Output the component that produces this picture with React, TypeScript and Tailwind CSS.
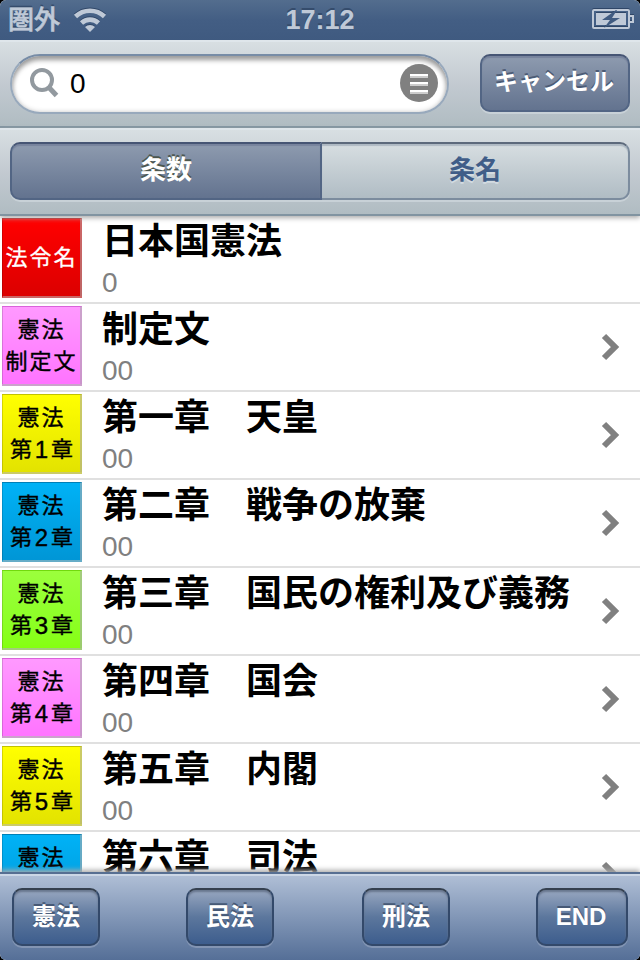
const latin = "font-['Liberation_Sans','Noto_Sans_CJK_JP',sans-serif]";

type Row = { tile: string[]; digit?: string; bg: string; title: string; code: string; light?: boolean };

const magenta = "bg-linear-to-b from-[#ff99ff] to-[#ff73ff]";
const yellow = "bg-linear-to-b from-[#ffff00] to-[#e3e300]";
const blue = "bg-linear-to-b from-[#00b2f6] to-[#0096d6]";
const green = "bg-linear-to-b from-[#9bff3c] to-[#85ff10]";

const rows: Row[] = [
  { tile: ["法令名"], bg: "bg-linear-to-b from-[#ff0000] to-[#dc0000]", title: "日本国憲法", code: "0", light: true },
  { tile: ["憲法", "制定文"], bg: magenta, title: "制定文", code: "00" },
  { tile: ["憲法"], digit: "1", bg: yellow, title: "第一章　天皇", code: "00" },
  { tile: ["憲法"], digit: "2", bg: blue, title: "第二章　戦争の放棄", code: "00" },
  { tile: ["憲法"], digit: "3", bg: green, title: "第三章　国民の権利及び義務", code: "00" },
  { tile: ["憲法"], digit: "4", bg: magenta, title: "第四章　国会", code: "00" },
  { tile: ["憲法"], digit: "5", bg: yellow, title: "第五章　内閣", code: "00" },
  { tile: ["憲法", "\u3000"], bg: blue, title: "第六章　司法", code: "" },
];

function StatusBar() {
  return (
    <header className="flex h-10 shrink-0 items-center justify-between bg-linear-to-b from-[#536d8e] via-[#435e84] to-[#3f5a80] text-[#bfc9d7]">
      <div className="flex w-[200px] items-center pl-[8px]">
        <span className="text-[26px] leading-[40px] font-medium [-webkit-text-stroke:0.6px_#bfc9d7] [text-shadow:0_-2px_0_#354c6c]">圏外</span>
        <svg className="mb-[2px] ml-[13px] drop-shadow-[0_-1px_0_#2f4667]" width="34" height="26" viewBox="0 0 34 26" fill="none" stroke="currentColor" strokeWidth="4.6">
          <path d="M2.5 10.5a21 21 0 0 1 29 0" />
          <path d="M8.5 17a12.5 12.5 0 0 1 17 0" />
          <path d="M17 26l-5-5a7 7 0 0 1 10 0z" fill="currentColor" stroke="none" />
        </svg>
      </div>
      <span className="text-[27px] leading-[40px] font-bold [text-shadow:0_-2px_0_#354c6c]">17:12</span>
      <div className="flex w-[200px] justify-end pr-[6px] pb-[2px]">
        <svg width="42" height="20" viewBox="0 0 42 20" className="drop-shadow-[0_-1px_0_#2f4667]">
          <rect x="1" y="1" width="36" height="18" rx="1" fill="none" stroke="#bfc9d7" strokeWidth="2" />
          <path d="M38 7h3v6h-3" fill="none" stroke="#bfc9d7" strokeWidth="2" />
          <rect x="4" y="4" width="30" height="12" fill="#bfc9d7" />
          <path d="M24 1L10 11h8l-6 8 16-10h-8l5-8z" fill="#405b81" />
        </svg>
      </div>
    </header>
  );
}

function SearchBar() {
  return (
    <div className="flex h-[88px] shrink-0 items-start justify-between border-b-2 border-[#8194a1] bg-linear-to-b from-[#d9e0e3] via-[#c3cad1] to-[#b0bcc2] px-[10px] pt-[14px] shadow-[inset_0_2px_0_#dfe6eb]">
      <div className="flex h-[60px] w-[439px] items-center rounded-full border-2 border-[#98a9bc] border-t-[#778ca6] bg-white pr-[9px] pl-[17px] shadow-[inset_0_4px_5px_#9b9b9b,inset_0_0_5px_#cccccc]">
        <svg width="31" height="32" viewBox="0 0 31 32" fill="none" stroke="#92999f" strokeWidth="4">
          <circle cx="13" cy="12" r="10" />
          <path d="M19.5 19l8 8.5" strokeWidth="5" />
        </svg>
        <span className="ml-[10px] grow text-[28px] leading-[56px] text-black">0</span>
        <svg className="mb-[2px]" width="38" height="38" viewBox="0 0 38 38">
          <circle cx="19" cy="19" r="19" fill="#808080" />
          <path d="M10 12h18M10 20h18M10 28h18" stroke="#fff" strokeWidth="4" />
          <path d="M10 13h18M10 21h18M10 29h18" stroke="#ccc" strokeWidth="2" />
        </svg>
      </div>
      <button className="h-[58px] w-[150px] rounded-[10px] border-2 border-[#526584] border-t-[#465574] bg-linear-to-b from-[#8e9baf] to-[#63738f] pr-[2px] pb-[2px] text-[24px] leading-[52px] font-bold text-white shadow-[0_2px_0_#c8d1d7,inset_0_2px_1px_#77839d] [text-shadow:0_-2px_0_#4c5b75]">
        キャンセル
      </button>
    </div>
  );
}

function Segments() {
  return (
    <div className="z-10 flex h-[88px] shrink-0 items-start border-b-2 border-[#8194a1] bg-linear-to-b from-[#d9e0e3] via-[#c3cad1] to-[#b0bcc2] px-[10px] pt-[14px] text-center text-[26px] leading-[52px] font-bold shadow-[inset_0_2px_0_#dfe6eb,0_2px_5px_#aaa]">
      <div className="h-[58px] w-[312px] rounded-l-[10px] border-2 border-[#526584] border-t-[#465574] bg-linear-to-b from-[#8e9baf] to-[#63738f] text-white shadow-[0_2px_0_#c8d1d7,inset_0_2px_1px_#77839d] [text-shadow:0_-2px_0_#4c5750]">条数</div>
      <div className="h-[58px] w-[308px] rounded-r-[10px] border-2 border-l-0 border-[#7c8c9e] border-t-[#5c697b] bg-linear-to-b from-[#d7dee1] to-[#b0bcc4] text-[#405d88] shadow-[0_2px_0_#c8d1d7,inset_0_2px_1px_#aeb9c3] [text-shadow:0_2px_0_#d3dbe1]">条名</div>
    </div>
  );
}

function ListRow({ row }: { row: Row }) {
  return (
    <li className="flex h-[88px] shrink-0 items-start border-b-2 border-[#e0e0e0] pt-[2px] pl-[2px]">
      <div className={`flex size-[80px] shrink-0 flex-col justify-center border border-black/15 border-r-2 border-b-2 border-r-[#aaa]/60 border-b-[#aaa]/60 text-center text-[22px] leading-[32px] font-normal whitespace-nowrap ${row.bg} ${row.light ? "text-white [-webkit-text-stroke:0.3px_white]" : "text-black [-webkit-text-stroke:0.4px_black]"}`}>
        {row.tile.map((line) => (
          <span key={line} className="tracking-[2px]">{line}</span>
        ))}
        {row.digit && (
          <span className="flex justify-center">
            第<span className="w-[19px] text-[24px]">{row.digit}</span>章
          </span>
        )}
      </div>
      <div className="ml-[20px] grow pt-px whitespace-nowrap">
        <div className="h-[46px] text-[36px] leading-[46px] font-bold text-black">{row.title}</div>
        <div className="text-[28px] leading-[36px] text-[#808080]">{row.code}</div>
      </div>
      {!row.light && (
        <svg className="mt-[27px] mr-[20px] shrink-0" width="20" height="28" viewBox="0 0 20 28" fill="none" stroke="#808080" strokeWidth="6">
          <path d="M4 3l11 11L4 25" />
        </svg>
      )}
    </li>
  );
}

function ToolButton({ label, wide }: { label: string; wide?: boolean }) {
  return (
    <button className={`h-[58px] rounded-[10px] border-2 border-[#33496a] border-t-[#35404f] bg-linear-to-b from-[#98a7c0] via-[#5c779d] to-[#3d5d8d] text-[24px] leading-[54px] font-bold text-white shadow-[0_2px_0_#8395b3,inset_0_2px_2px_#68768e] [text-shadow:0_-2px_0_#465976] ${wide ? "w-[92px] pr-[2px]" : "w-[88px]"}`}>
      {label}
    </button>
  );
}

export default function App() {
  return (
    <div className="h-[960px] w-[640px] overflow-hidden bg-black">
      <main className={`flex h-full flex-col overflow-hidden rounded-[6px] bg-white ${latin}`}>
        <StatusBar />
        <SearchBar />
        <Segments />
        <ul className="flex min-h-0 flex-1 flex-col overflow-hidden">
          {rows.map((row) => (
            <ListRow key={row.title} row={row} />
          ))}
        </ul>
        <footer className="z-10 grid h-[88px] shrink-0 grid-cols-[174px_176px_174px_92px] items-start border-t-2 border-[#576f92] bg-linear-to-b from-[#b1c0d7] to-[#556f97] pt-[14px] pl-[12px] shadow-[inset_0_2px_0_#ccd7e6,0_-2px_5px_#aaa]">
          <ToolButton label="憲法" />
          <ToolButton label="民法" />
          <ToolButton label="刑法" />
          <ToolButton label="END" wide />
        </footer>
      </main>
    </div>
  );
}
